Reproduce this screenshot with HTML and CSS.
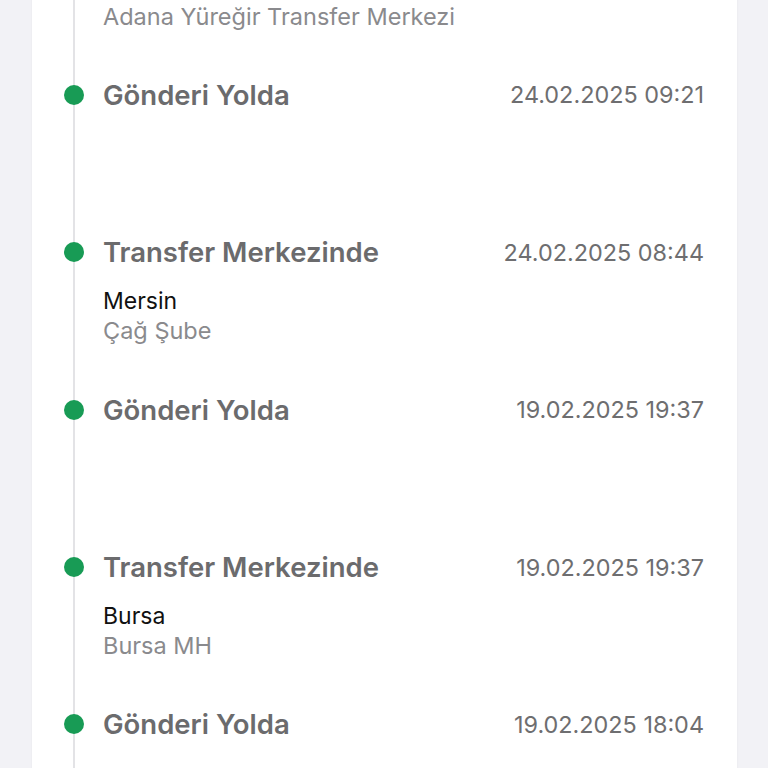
FILE: index.html
```html
<!DOCTYPE html>
<html lang="tr">
<head>
  <meta charset="UTF-8">
  <meta name="viewport" content="width=device-width, initial-scale=1">
  <title>Gönderi Takip</title>
  <link rel="stylesheet" href="styles.css">
</head>
<body>

  <div class="card">
    <ul class="timeline">
      <li class="step">
        <div class="step-head">
          <span class="dot"></span>
          <span class="title">Transfer Merkezinde</span>
          <span class="date">24.02.2025 14:10</span>
        </div>
        <div class="place">Adana</div>
        <div class="branch">Adana Yüreğir Transfer Merkezi</div>
      </li>
      <li class="step">
        <div class="step-head">
          <span class="dot"></span>
          <span class="title">Gönderi Yolda</span>
          <span class="date">24.02.2025 09:21</span>
        </div>
      </li>
      <li class="step">
        <div class="step-head">
          <span class="dot"></span>
          <span class="title">Transfer Merkezinde</span>
          <span class="date">24.02.2025 08:44</span>
        </div>
        <div class="place">Mersin</div>
        <div class="branch">Çağ Şube</div>
      </li>
      <li class="step">
        <div class="step-head">
          <span class="dot"></span>
          <span class="title">Gönderi Yolda</span>
          <span class="date">19.02.2025 19:37</span>
        </div>
      </li>
      <li class="step">
        <div class="step-head">
          <span class="dot"></span>
          <span class="title">Transfer Merkezinde</span>
          <span class="date">19.02.2025 19:37</span>
        </div>
        <div class="place">Bursa</div>
        <div class="branch">Bursa MH</div>
      </li>
      <li class="step">
        <div class="step-head">
          <span class="dot"></span>
          <span class="title">Gönderi Yolda</span>
          <span class="date">19.02.2025 18:04</span>
        </div>
      </li>
    </ul>
  </div>

</body>
</html>
```

FILE: styles.css
```css
body {
  font-family: Inter, "Noto Sans", sans-serif;
  margin: 0;
  background-color: #f2f2f6;
  height: 768px;
  overflow: hidden;
  padding: 0 31px 0 32px;
}

.card {
  background-color: white;
  margin-top: -79.5px;
  box-shadow: 0 0 2px rgba(0,0,0,0.06);
}

.timeline {
  list-style: none;
  margin: 0;
  padding: 0 33px 0 31px;
  background: linear-gradient(#e3e3e6, #e3e3e6) no-repeat 41px 0 / 2px 100%;
}

.step {
  height: 157.4px;
}

.step-head {
  display: flex;
  align-items: center;
  height: 34px;
}

.dot {
  width: 20px;
  height: 20px;
  border-radius: 50%;
  background-color: #189b55;
  margin-left: 1px;
  margin-right: 19px;
}

.title {
  flex: 1;
  font-size: 27.5px;
  font-weight: 600;
  color: #6b6b6d;
}

.date {
  font-size: 23.4px;
  color: #6e6e70;
}

.place, .branch {
  padding-left: 40px;
  font-size: 23px;
  line-height: 30px;
}

.place {
  margin-top: 17px;
  color: #111;
}

.branch {
  font-size: 23.5px;
  color: #8a8a8d;
}
```
